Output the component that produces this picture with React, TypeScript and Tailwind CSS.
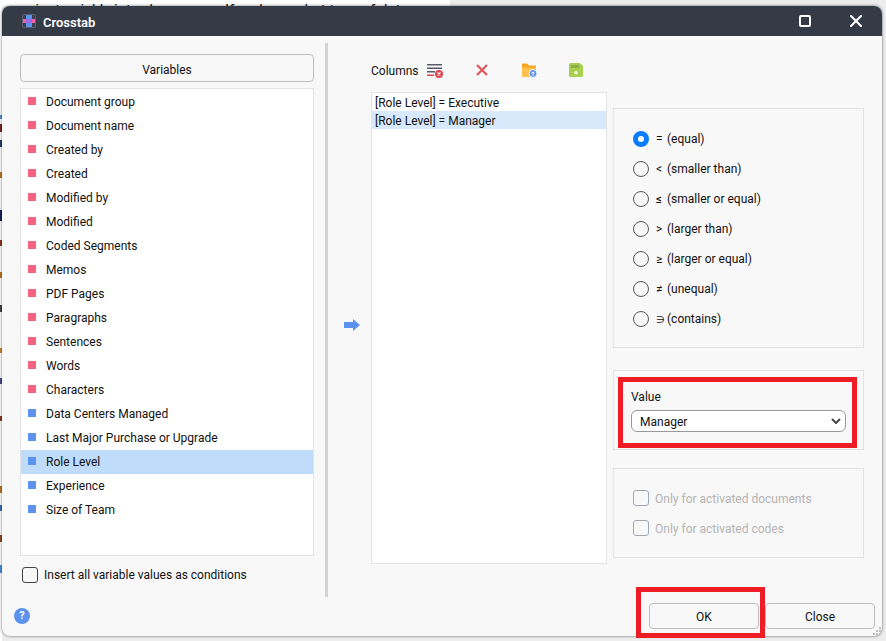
const pink = "#f4637f";
const blue = "#5b93ee";

const vars: [string, string][] = [
  ["Document group", pink],
  ["Document name", pink],
  ["Created by", pink],
  ["Created", pink],
  ["Modified by", pink],
  ["Modified", pink],
  ["Coded Segments", pink],
  ["Memos", pink],
  ["PDF Pages", pink],
  ["Paragraphs", pink],
  ["Sentences", pink],
  ["Words", pink],
  ["Characters", pink],
  ["Data Centers Managed", blue],
  ["Last Major Purchase or Upgrade", blue],
  ["Role Level", blue],
  ["Experience", blue],
  ["Size of Team", blue],
];

const ops: [string, string][] = [
  ["=", "(equal)"],
  ["<", "(smaller than)"],
  ["≤", "(smaller or equal)"],
  [">", "(larger than)"],
  ["≥", "(larger or equal)"],
  ["≠", "(unequal)"],
  ["∋", "(contains)"],
];

const edge: [number, number, string][] = [
  [115, 4, "#4a90d9"],
  [124, 8, "#7a1f2b"],
  [140, 7, "#2a3a6a"],
  [172, 6, "#b9772a"],
  [210, 11, "#14205e"],
  [240, 6, "#8a3a20"],
  [272, 6, "#b9772a"],
  [305, 7, "#444444"],
  [348, 5, "#c98a30"],
  [378, 6, "#4a4a8a"],
  [416, 5, "#8a3a20"],
  [486, 7, "#b9772a"],
  [505, 6, "#3a6ab0"],
  [535, 7, "#8a4a20"],
  [565, 8, "#4a90d9"],
];

export default function App() {
  return (
    <div className="font-['Roboto','Noto_Sans',sans-serif] relative w-[886px] h-[641px] overflow-hidden bg-[#ededed] text-[12px] text-[#111]">
      <div className="absolute left-0 top-0 w-[450px] h-[6px] overflow-hidden bg-white whitespace-nowrap text-[15px] leading-[20px] pl-[8px]">
        you just quickly introduce yourself and say what type of data
      </div>
      <div className="absolute left-0 top-[6px] w-[2px] h-[635px] bg-white" />
      {edge.map(([y, h, c]) => (
        <div key={y} className="absolute left-0 w-[2px]" style={{ top: y, height: h, backgroundColor: c }} />
      ))}
      <div className="absolute left-[2px] top-[6px] w-[880px] h-[630px] rounded-[8px] overflow-hidden bg-[#f8f8f8] flex flex-col shadow-[0_0_3px_rgba(0,0,0,0.6)]">
        <div className="h-[30px] bg-[#343a46] flex items-center pl-[20px] pr-[20px] text-white shrink-0">
          <svg width="14" height="14" viewBox="0 0 14 14">
            <rect x="0" y="0" width="14" height="14" rx="2" fill="#5a606e" />
            <rect x="1" y="1" width="12" height="12" rx="1" fill="#3a404c" />
            <rect x="4" y="1" width="6" height="12" fill="#5b93ee" />
            <rect x="1" y="5" width="12" height="4" fill="#ee5fae" />
            <rect x="4" y="5" width="6" height="4" fill="#9b6ce0" />
          </svg>
          <span className="ml-[7px] pt-[3px] text-[13px] font-semibold">Crosstab</span>
          <div className="ml-auto flex items-center gap-[39px]">
            <div className="w-[12px] h-[12px] border-2 border-white rounded-[2px]" />
            <svg width="12" height="12" viewBox="0 0 12 12" stroke="white" strokeWidth="2" strokeLinecap="round">
              <path d="M1 1l10 10M11 1L1 11" />
            </svg>
          </div>
        </div>

        <div className="flex-1 flex min-h-0">
          <div className="w-[323px] shrink-0 pl-[18px] pt-[18px] flex flex-col">
            <button className="w-[294px] h-[28px] pt-[3px] border border-[#bdbdbd] rounded-[4px] bg-[#f8f8f8]">Variables</button>
            <div className="mt-[6px] w-[294px] h-[468px] bg-white border border-[#e3e3e3] py-[1px]">
              {vars.map(([name, color]) => (
                <div key={name} className={`h-[24px] flex items-center pl-[7px] ${name === "Role Level" ? "bg-[#bfdcfb]" : ""}`}>
                  <span className="w-[8px] h-[8px] mb-[2px]" style={{ backgroundColor: color }} />
                  <span className="ml-[10px]">{name}</span>
                </div>
              ))}
            </div>
            <label className="mt-[11px] ml-[2px] flex items-center h-[16px]">
              <span className="w-[16px] h-[16px] border border-[#444] rounded-[3px] bg-[#f8f8f8]" />
              <span className="ml-[6px]">Insert all variable values as conditions</span>
            </label>
          </div>

          <div className="w-[3px] shrink-0 bg-[#d3d3d3] mt-[7px] mb-[39px]" />

          <div className="w-[23px] shrink-0 relative">
            <svg className="absolute left-[16px] top-[283px]" width="16" height="12" viewBox="0 0 16 12">
              <path d="M0 3h9V0l7 6-7 6V9H0z" fill="#5b93ee" />
            </svg>
          </div>

          <div className="w-[236px] shrink-0 ml-[20px] pt-[18px] flex flex-col">
            <div className="h-[32px] flex items-center">
              <span className="w-[48px] pt-[2px] whitespace-nowrap">Columns</span>
              <svg className="ml-[8px]" width="17" height="15" viewBox="0 0 17 15">
                <path d="M0 1h15v1.5H0zM0 4.5h15V6H0zM0 8h8v1.5H0z" fill="#565b66" />
                <path d="M0 11.5h7V13H0z" fill="#e0444c" />
                <circle cx="12" cy="11" r="4" fill="#e0444c" />
                <path d="M10.5 9.5l3 3M13.5 9.5l-3 3" stroke="#fff" strokeWidth="1.1" />
              </svg>
              <svg className="ml-[32px]" width="12" height="12" viewBox="0 0 12 12" stroke="#e0575a" strokeWidth="2.2">
                <path d="M1 1l10 10M11 1L1 11" />
              </svg>
              <svg className="ml-[34px]" width="15" height="15" viewBox="0 0 15 15">
                <path d="M0 1.5a1 1 0 0 1 1-1h4l2 2h6a1 1 0 0 1 1 1V6H0z" fill="#f5a623" />
                <path d="M0 4.5h14V13a1 1 0 0 1-1 1H1a1 1 0 0 1-1-1z" fill="#ffc04d" />
                <circle cx="11" cy="10.5" r="4" fill="#5b93ee" stroke="#f8f8f8" />
                <path d="M11 12.8V9M9.5 10.3L11 8.8l1.5 1.5" stroke="#fff" fill="none" />
              </svg>
              <svg className="ml-[32px]" width="14" height="14" viewBox="0 0 14 14">
                <path d="M1.5 0H11l3 3v9.5a1.5 1.5 0 0 1-1.5 1.5h-11A1.5 1.5 0 0 1 0 12.5v-11A1.5 1.5 0 0 1 1.5 0z" fill="#a9cf4e" />
                <rect x="2" y="2" width="8" height="3" fill="#8fae45" />
                <circle cx="7" cy="9.6" r="1.7" fill="#fff" />
              </svg>
            </div>
            <div className="mt-[6px] w-[236px] h-[472px] bg-white border border-[#e3e3e3]">
              <div className="h-[18px] pl-[3px] pt-[2px] flex items-center">[Role Level] = Executive</div>
              <div className="h-[18px] pl-[3px] pt-[2px] flex items-center bg-[#d7e9fb]">[Role Level] = Manager</div>
            </div>
          </div>

          <div className="w-[251px] shrink-0 ml-[6px] pt-[72px] flex flex-col">
            <div className="h-[240px] border border-[#e3e3e3] pl-[19px] pt-[15px]">
              {ops.map(([sym, label], i) => (
                <div key={label} className="h-[30px] flex items-center">
                  {i === 0 ? (
                    <span className="w-[16px] h-[16px] rounded-full border-[5px] border-[#0a7cff] bg-white" />
                  ) : (
                    <span className="w-[16px] h-[16px] rounded-full border border-[#555] bg-[#f8f8f8]" />
                  )}
                  <span className={`ml-[7px] w-[11px] shrink-0 ${sym === "∋" ? "text-[10px]" : ""}`}>{sym}</span>
                  <span>{label}</span>
                </div>
              ))}
            </div>
            <div className="mt-[22px] h-[80px] border border-[#e3e3e3] pl-[17px] pt-[18px]">
              <div className="leading-[16px]">Value</div>
              <div className="mt-[5px] w-[215px] h-[22px] bg-white border border-[#999] rounded-[6px] flex items-center pl-[8px] pr-[4px]">
                <span className="pt-[2px]">Manager</span>
                <svg className="ml-auto" width="10" height="6" viewBox="0 0 10 6" fill="none" stroke="#444" strokeWidth="2">
                  <path d="M1 1l4 4 4-4" />
                </svg>
              </div>
            </div>
            <div className="mt-[18px] h-[90px] border border-[#e3e3e3] pl-[19px] pt-[21px] text-[#b4b4b4]">
              <div className="h-[16px] flex items-center">
                <span className="w-[16px] h-[16px] border border-[#9fa8b4] rounded-[3px]" />
                <span className="ml-[6px] pt-[2px]">Only for activated documents</span>
              </div>
              <div className="mt-[14px] h-[16px] flex items-center">
                <span className="w-[16px] h-[16px] border border-[#9fa8b4] rounded-[3px]" />
                <span className="ml-[6px] pt-[2px]">Only for activated codes</span>
              </div>
            </div>
          </div>
        </div>

        <div className="absolute left-[12px] top-[602px] w-[16px] h-[16px] rounded-full bg-[#5b93ee] text-white font-bold text-[11px] leading-[16px] text-center">?</div>
        <div className="absolute left-[647px] top-[597px] flex gap-[6px]">
          <button className="w-[110px] h-[26px] pt-[2px] border border-[#bdbdbd] rounded-[4px]">OK</button>
          <button className="w-[110px] h-[26px] pt-[2px] border border-[#bdbdbd] rounded-[4px]">Close</button>
        </div>
        <svg className="absolute right-[1px] bottom-[1px]" width="8" height="8" viewBox="0 0 8 8" fill="#bcbcbc">
          <rect x="6" y="0" width="2" height="2" />
          <rect x="3" y="3" width="2" height="2" />
          <rect x="6" y="3" width="2" height="2" />
          <rect x="0" y="6" width="2" height="2" />
          <rect x="3" y="6" width="2" height="2" />
          <rect x="6" y="6" width="2" height="2" />
        </svg>
      </div>

      <div className="absolute left-[618px] top-[377px] w-[239px] h-[71px] border-[5px] border-[#ee1c25]" />
      <div className="absolute left-[636px] top-[587px] w-[129px] h-[51px] border-[5px] border-[#ee1c25]" />
    </div>
  );
}
